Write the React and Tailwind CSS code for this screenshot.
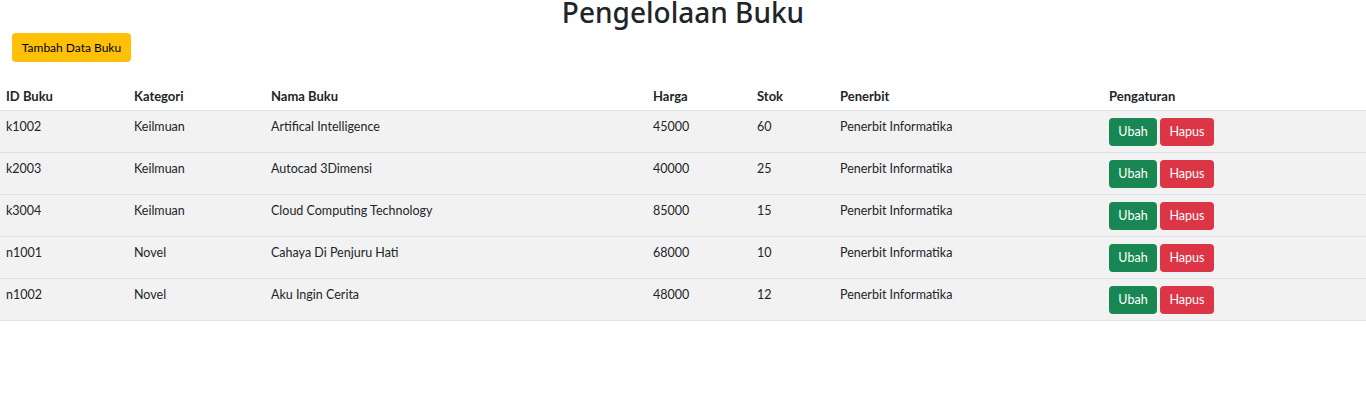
import React from "react";

const rows = [
  ["k1002", "Keilmuan", "Artifical Intelligence", "45000", "60", "Penerbit Informatika"],
  ["k2003", "Keilmuan", "Autocad 3Dimensi", "40000", "25", "Penerbit Informatika"],
  ["k3004", "Keilmuan", "Cloud Computing Technology", "85000", "15", "Penerbit Informatika"],
  ["n1001", "Novel", "Cahaya Di Penjuru Hati", "68000", "10", "Penerbit Informatika"],
  ["n1002", "Novel", "Aku Ingin Cerita", "48000", "12", "Penerbit Informatika"],
];

const widths = ["w-[128px]", "w-[137px]", "w-[382px]", "w-[104px]", "w-[83px]", "w-[269px]", "w-[263px]"];
const headers = ["ID Buku", "Kategori", "Nama Buku", "Harga", "Stok", "Penerbit", "Pengaturan"];

export default function App() {
  return (
    <div className="w-[1366px] h-[407px] bg-white text-[#212529] overflow-hidden" style={{ fontFamily: 'Lato, sans-serif' }}>
      <h1 className="text-center text-[28px] font-medium leading-[28px] -mt-[2px] h-[26px]" style={{ fontFamily: '"Noto Sans", sans-serif' }}>Pengelolaan Buku</h1>
      <div className="px-3 pt-[9px]">
        <button className="bg-[#ffc107] text-black text-[12px] h-[29px] w-[119px] rounded-[4px] leading-[29px]">Tambah Data Buku</button>
      </div>
      <table className="mt-[17px] w-full border-collapse table-fixed text-[12.5px]">
        <thead>
          <tr className="border-b border-[#dee2e6]">
            {headers.map((h, i) => (
              <th key={h} className={`${widths[i]} text-left font-bold text-[13px] px-[6px] pt-[7px] pb-[4px] leading-[20px]`}>{h}</th>
            ))}
          </tr>
        </thead>
        <tbody>
          {rows.map((r) => (
            <tr key={r[0]} className="bg-[#f2f2f2] border-b border-[#dee2e6]">
              {r.map((c, i) => (
                <td key={i} className="align-top px-[6px] pt-[6px] pb-[6px] leading-[20px]">{c}</td>
              ))}
              <td className="align-top px-[6px] pt-[7px] pb-[6px]">
                <div className="flex gap-[3px]">
                  <button className="bg-[#198754] text-white text-[12.5px] h-[28px] w-[48px] rounded-[4px]">Ubah</button>
                  <button className="bg-[#dc3545] text-white text-[12.5px] h-[28px] w-[54px] rounded-[4px]">Hapus</button>
                </div>
              </td>
            </tr>
          ))}
        </tbody>
      </table>
    </div>
  );
}
